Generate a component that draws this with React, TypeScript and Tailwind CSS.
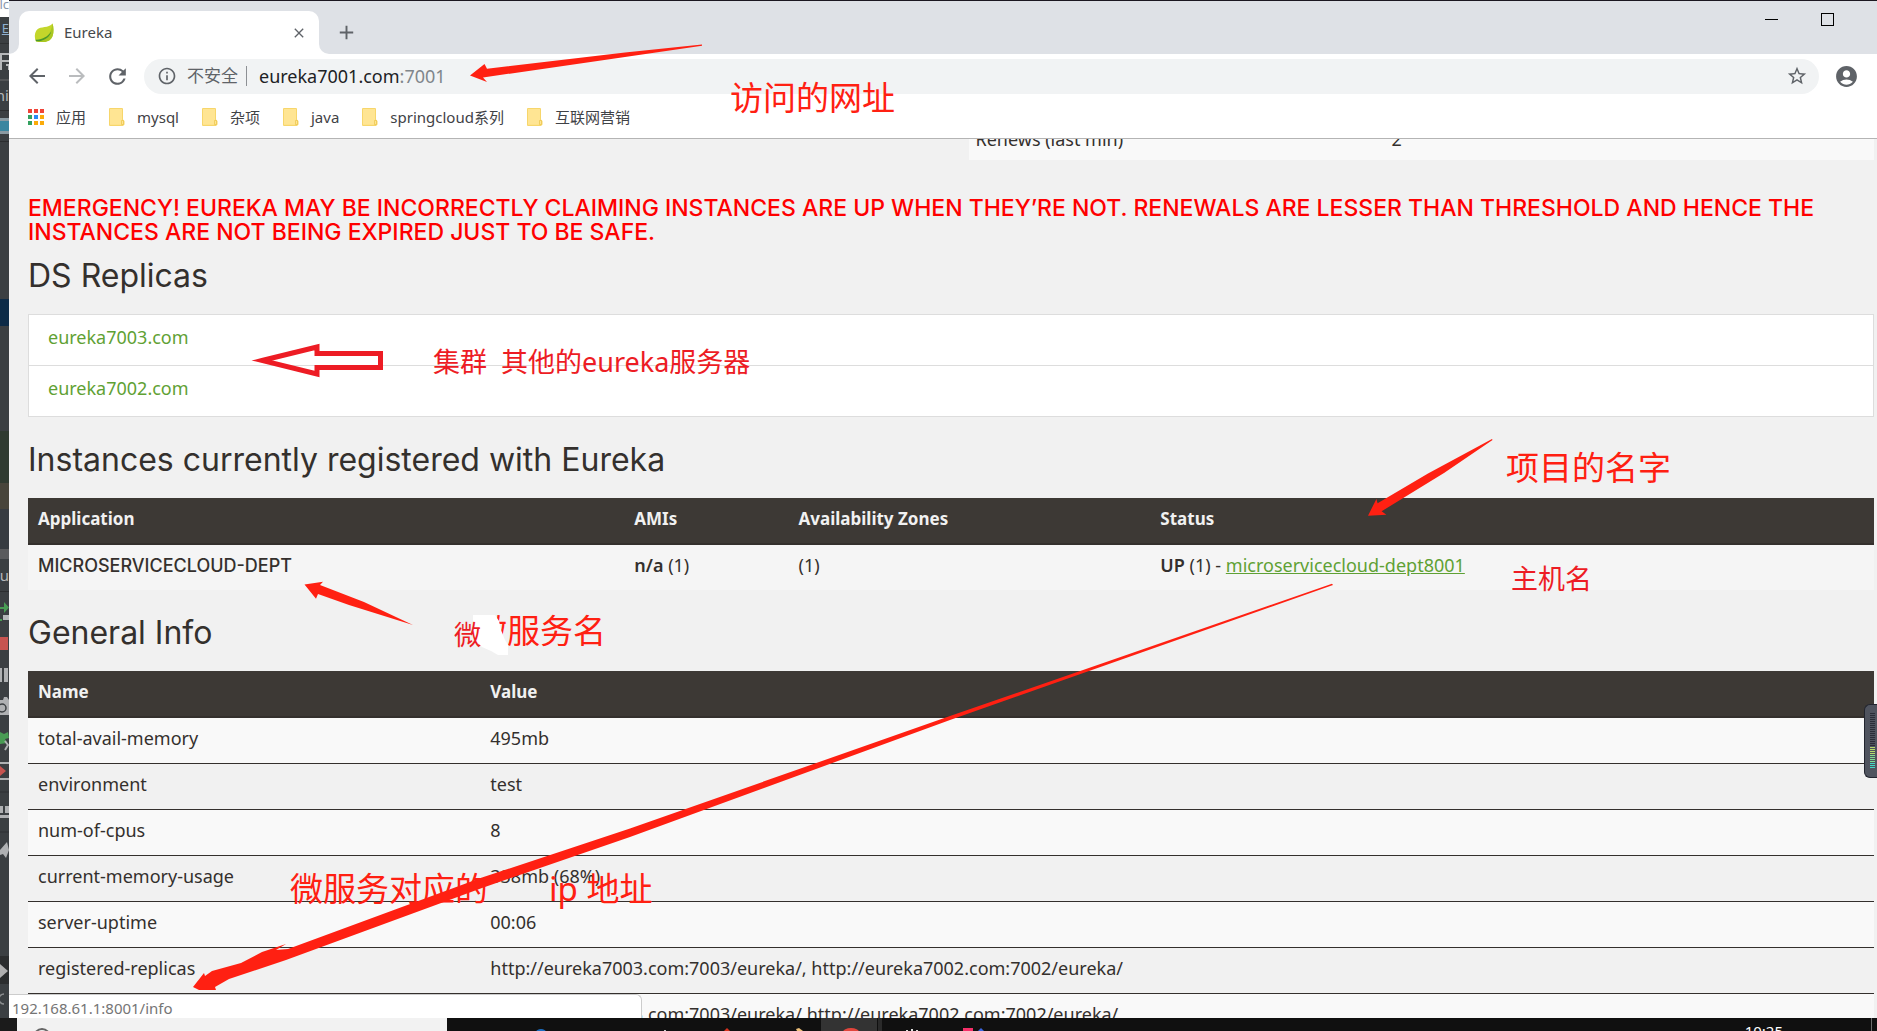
import React from "react";
import {
  MdArrowBack,
  MdArrowForward,
  MdRefresh,
  MdInfoOutline,
  MdStarBorder,
  MdAccountCircle,
  MdClose,
  MdAdd,
} from "react-icons/md";

const bookmarks = ["mysql", "杂项", "java", "springcloud系列", "互联网营销"];

const replicas = ["eureka7003.com", "eureka7002.com"];

const generalInfo = [
  ["total-avail-memory", "495mb"],
  ["environment", "test"],
  ["num-of-cpus", "8"],
  ["current-memory-usage", "338mb (68%)"],
  ["server-uptime", "00:06"],
  [
    "registered-replicas",
    "http://eureka7003.com:7003/eureka/, http://eureka7002.com:7002/eureka/",
  ],
  [
    "unavailable-replicas",
    "http://eureka7003.com:7003/eureka/,http://eureka7002.com:7002/eureka/,",
  ],
];

const appDots = [
  "bg-[#f04438]",
  "bg-[#f04438]",
  "bg-[#f04438]",
  "bg-[#34a160]",
  "bg-[#2a8cf5]",
  "bg-[#fbab09]",
  "bg-[#34a160]",
  "bg-[#fbab09]",
  "bg-[#fbab09]",
];

function LeafIcon() {
  return (
    <svg viewBox="0 0 20 20" className="size-5" aria-hidden="true">
      <path
        d="M18.6 0.4C19.6 4 20 9 18.6 13c-1.300 3.800-4.800 6-9 6-2.600 0-5.600.300-7.600-.600C.4 14.500.2 9.600 3.200 6.400 6.500 3 14.500 5.400 18.600.400z"
        fill="#c3d62b"
      />
      <path
        d="M18.600.4C19.600 4 20 9 18.600 13c-1.300 3.800-4.800 6-9 6-2 0-4.600.300-6.600-.2C10 19 16.500 13 18.600.400z"
        fill="#a9c722"
      />
      <path d="M1.600 16.600C8 17 14 13.500 17.200 8.500 16 14 9.500 19 2 18.300z" fill="#4c9a2a" />
    </svg>
  );
}

function FolderIcon() {
  return (
    <svg viewBox="0 0 16 18" className="h-[18px] w-4 shrink-0" aria-hidden="true">
      <path d="M1 0h12a1 1 0 0 1 1 1v10.500l1.500 1.500v3.500l-1.500 1.500H1a1 1 0 0 1-1-1V1a1 1 0 0 1 1-1z" fill="#f7d66b" />
      <path d="M1 1h12v15.800H1z" fill="#ffe593" />
      <path d="M12.500 12.500h2v4h-2z" fill="#ffe593" stroke="#eec852" strokeWidth="0.800" />
    </svg>
  );
}

function TabStrip() {
  return (
    <header className="flex h-[54px] shrink-0 items-end border-t border-[#1b1720] bg-[#dee1e6]">
      <div className="flex h-[43px] w-2.5 shrink-0 items-end bg-white">
        <span className="size-full rounded-br-[10px] bg-[#dee1e6]" />
      </div>
      <div className="flex h-[43px] w-[300px] items-center rounded-t-[10px] bg-white pr-3 pl-[15px]">
        <LeafIcon />
        <span className="ml-2.5 flex-1 text-[15px] text-[#45484c]">Eureka</span>
        <button aria-label="Close tab" className="text-[#5f6368]">
          <MdClose size={16} />
        </button>
      </div>
      <div className="flex h-[43px] w-2.5 shrink-0 items-end bg-white">
        <span className="size-full rounded-bl-[10px] bg-[#dee1e6]" />
      </div>
      <button aria-label="New tab" className="mb-[10px] ml-[6px] text-[#5f6368]">
        <MdAdd size={23} />
      </button>
      <div className="mr-[43px] ml-auto flex self-start pt-3">
        <button aria-label="Minimize" className="flex h-[13px] w-[13px] items-center">
          <span className="h-px w-full bg-black" />
        </button>
        <button aria-label="Maximize" className="ml-[43px] size-[13px] border border-black" />
      </div>
    </header>
  );
}

function Toolbar() {
  return (
    <div className="flex h-11 shrink-0 items-center bg-white pr-[18px] pl-4 text-[#5f6368]">
      <button aria-label="Back">
        <MdArrowBack size={24} />
      </button>
      <button aria-label="Forward" className="ml-4 text-[#babcbe]">
        <MdArrowForward size={24} />
      </button>
      <button aria-label="Reload" className="ml-4">
        <MdRefresh size={25} />
      </button>
      <div className="ml-[14px] flex h-[35px] flex-1 items-center rounded-full bg-[#f1f3f4] pr-[11px] pl-[13px]">
        <MdInfoOutline size={20} className="shrink-0" />
        <span className="ml-2.5 text-[17px] whitespace-nowrap">不安全</span>
        <span className="mx-2 h-5 w-px bg-[#8d9094]" />
        <div className="ml-1 flex-1 text-[18px] leading-6">
          <span className="text-[#202124]">eureka7001.com</span>
          <span className="text-[#80868b]">:7001</span>
        </div>
        <button aria-label="Bookmark this page">
          <MdStarBorder size={22} />
        </button>
      </div>
      <button aria-label="Profile" className="ml-[15px]">
        <MdAccountCircle size={25} />
      </button>
    </div>
  );
}

function BookmarksBar() {
  return (
    <nav className="flex h-[41px] shrink-0 items-center gap-[23px] border-b border-[#b4b4b4] bg-white pb-[2px] pl-[19px] text-[15px] text-[#3f4246]">
      <a href="#apps" className="flex items-center gap-3">
        <span className="grid grid-cols-3 gap-0.5">
          {appDots.map((c, i) => (
            <span key={i} className={`size-1 ${c}`} />
          ))}
        </span>
        应用
      </a>
      {bookmarks.map((b) => (
        <a key={b} href="#bookmark" className="flex items-center gap-3 whitespace-nowrap">
          <FolderIcon />
          {b}
        </a>
      ))}
    </nav>
  );
}

function SectionTitle({ children }: { children: React.ReactNode }) {
  return (
    <h1 className="mt-[23px] mb-[18px] font-['Inter','Noto_Sans',sans-serif] text-[32px] leading-10 text-[#34302d]">
      {children}
    </h1>
  );
}

const th =
  "border-b-2 border-[#34302d] px-2.5 pt-2.5 pb-[13px] text-left text-[17px] leading-[22px] font-bold text-[#f1f1f1]";
const td = "px-2.5 pt-2 pb-[13px] leading-6";

function EurekaPage() {
  return (
    <main className="min-h-0 flex-1 overflow-hidden bg-[#f1f1f1] pr-[3px] pl-[19px] text-[18px] text-[#34302d]">
      <div className="-mt-5 flex justify-end">
        <table className="w-[49%] table-fixed bg-[#f9f9f9]">
          <tbody>
            <tr>
              <td className="w-[46%] px-1.5 pt-2 pb-[9px] leading-6">Renews (last min)</td>
              <td className="px-1.5 pt-2 pb-[9px] leading-6">2</td>
            </tr>
          </tbody>
        </table>
      </div>

      <h4 className="mt-9 -mb-[11px] font-['Inter','Noto_Sans',sans-serif] text-[23px] leading-6 font-medium text-[#ff0000]">
        EMERGENCY! EUREKA MAY BE INCORRECTLY CLAIMING INSTANCES ARE UP WHEN THEY’RE NOT. RENEWALS ARE
        LESSER THAN THRESHOLD AND HENCE THE INSTANCES ARE NOT BEING EXPIRED JUST TO BE SAFE.
      </h4>

      <SectionTitle>DS Replicas</SectionTitle>
      <ul className="divide-y divide-[#dddddd] border border-[#dddddd] bg-white">
        {replicas.map((r) => (
          <li key={r} className="px-[19px] pt-2 pb-[14px] leading-7">
            <a href="#replica" className="text-[#5fa134]">
              {r}
            </a>
          </li>
        ))}
      </ul>

      <SectionTitle>Instances currently registered with Eureka</SectionTitle>
      <table className="w-full table-fixed">
        <thead className="bg-[#3d3935]">
          <tr>
            <th className={`w-[32.3%] ${th}`}>Application</th>
            <th className={`w-[8.9%] ${th}`}>AMIs</th>
            <th className={`w-[19.6%] ${th}`}>Availability Zones</th>
            <th className={th}>Status</th>
          </tr>
        </thead>
        <tbody className="bg-[#f5f5f5]">
          <tr>
            <td className="px-2.5 pt-[9px] pb-3 font-['Inter','Noto_Sans',sans-serif] leading-6 font-medium">
              MICROSERVICECLOUD-DEPT
            </td>
            <td className={td}>
              <b className="font-semibold">n/a</b> (1)
            </td>
            <td className={td}>(1)</td>
            <td className={td}>
              <b className="font-semibold">UP</b> (1) -{" "}
              <a href="#info" className="text-[#5fa134] underline">
                microservicecloud-dept8001
              </a>
            </td>
          </tr>
        </tbody>
      </table>

      <SectionTitle>General Info</SectionTitle>
      <table className="w-full table-fixed">
        <thead className="bg-[#3d3935]">
          <tr>
            <th className={`w-[24.5%] ${th}`}>Name</th>
            <th className={th}>Value</th>
          </tr>
        </thead>
        <tbody>
          {generalInfo.map(([name, value]) => (
            <tr key={name} className="border-b border-[#34302d] odd:bg-[#f9f9f9]">
              <td className={td}>{name}</td>
              <td className={td}>{value}</td>
            </tr>
          ))}
        </tbody>
      </table>
    </main>
  );
}

function IdeSliver() {
  return (
    <aside className="flex w-[9px] shrink-0 flex-col overflow-hidden bg-[#3b3f42] text-[13px] text-[#b5b7b9]">
      <div className="flex h-[17px] justify-end bg-white leading-[8px] text-[#8a97ad]">lc</div>
      <div className="flex h-[27px] justify-end border-b border-[#2e3133] leading-[22px] text-[#8fb0d0] underline">
        E
      </div>
      <div className="flex h-[37px] items-center justify-end border-b-2 border-[#535557]">
        <svg width="9" height="18" aria-hidden="true">
          <path d="M1 17V1h8M1 8h8M6 12h3v5" fill="none" stroke="#b5b7b9" strokeWidth="2" />
        </svg>
      </div>
      <div className="flex h-[30px] items-center justify-end border-b border-[#2b2d2f] text-[15px]">mi</div>
      <div className="flex h-[31px] items-center border-b border-[#2b2d2f]">
        <span className="h-4 w-full border-y-[3px] border-[#8a9aa2] bg-[#3a86a0]" />
      </div>
      <div className="h-[157px]" />
      <div className="h-[27px] bg-[#0d2b47]" />
      <div className="h-[105px]" />
      <div className="h-[52px] bg-[#303b31]" />
      <div className="h-[26px] bg-[#48453b]" />
      <div className="h-10 bg-[#373c41]" />
      <div className="h-2.5 bg-[#5a5b5d]" />
      <div className="flex h-[33px] items-center justify-end border-b border-[#2b2d2f] text-[15px]">Ru</div>
      <svg width="9" height="426" className="shrink-0" aria-hidden="true">
        <path d="M0 15h4v-5l5 5.500-5 5.500v-4H0z" fill="#499c54" />
        <path d="M3 23h6v5H3z" fill="#b5b7b9" />
        <path d="M0 27h2v2H0z" fill="#499c54" />
        <path d="M0 45h8v13H0z" fill="#c75450" />
        <path d="M0 76h2v14H0zM4 76h4v14H4z" fill="#afb1b3" />
        <path d="M0 108h3l1-3h3l2 3v15H0z" fill="#afb1b3" />
        <circle cx="2" cy="116" r="4" fill="#afb1b3" stroke="#3b3f42" strokeWidth="1.500" />
        <path d="M0 140l4 2 4-2 1 6-4 1 2 4-7 1z" fill="#499c54" />
        <path d="M5 149l3 4-3 5" fill="none" stroke="#afb1b3" strokeWidth="2" />
        <path d="M0 171h9M0 187h9" stroke="#afb1b3" strokeWidth="2" />
        <path d="M0 174l6 5-6 5z" fill="#c75450" />
        <path d="M0 200h9M0 240h9" stroke="#2e3133" />
        <path d="M0 214h3v7H0zM5 214h4v7H5zM0 223h9v3H0z" fill="#afb1b3" />
        <path d="M0 258l7-8 2 8-3 8-3-4-3 1z" fill="#afb1b3" />
        <path d="M0 364h9v28H0z" fill="#2b2d2e" />
        <path d="M0 372l8 7-8 7z" fill="#b0b0b0" />
        <path d="M4 402a5 5 0 1 0 0 10" fill="none" stroke="#8b8d8f" strokeWidth="1.500" />
      </svg>
    </aside>
  );
}

function Taskbar() {
  return (
    <footer className="flex h-[13px] shrink-0 overflow-hidden bg-[#101010]">
      <div className="w-[17px] bg-[#1b1b1b]" />
      <div className="h-full w-[430px] bg-[#f2f2f2] pt-2.5 pl-4">
        <span className="block size-[18px] rounded-full border-2 border-[#666]" />
      </div>
      <svg width="600" height="13" aria-hidden="true">
        <ellipse cx="94" cy="14" rx="5" ry="3" fill="#1c6dc0" />
        <path d="M217 12h2v1h-2z" fill="#ccc" />
        <path d="M277 13l3-3 3 3z" fill="#d8321f" />
        <path d="M349 11l3-1 4 3h-6z" fill="#eec07a" />
        <path d="M374 0h56v13h-56z" fill="#333" />
        <path d="M431 0h4v13h-4z" fill="#2a2a2a" />
        <ellipse cx="404" cy="14" rx="8" ry="4" fill="#e2453c" />
        <path d="M459 12h2v1h-2zM464 11h2v2h-2zM469 12h2v1h-2z" fill="#ddd" />
        <path d="M516 10h10v3h-10z" fill="#f52f68" />
        <path d="M531 13l3-3 3 3z" fill="#3b66e0" />
      </svg>
      <time className="mr-[88px] ml-auto h-4 pt-[5px] text-[15px] leading-4 text-white">10:25</time>
      <span className="mr-[5px] w-px bg-[#6d6d6d]" />
    </footer>
  );
}

function VolumeWidget() {
  return (
    <div className="absolute top-[704px] right-0 flex h-[74px] w-[13px] justify-end rounded-l-md border border-r-0 border-[#22252f] bg-[#50545f] py-2 pr-0.5">
      <div className="flex w-[5px] flex-col gap-px overflow-hidden">
        {Array.from({ length: 29 }, (_, i) => (
          <span
            key={i}
            className={`h-px shrink-0 ${i < 17 ? "bg-[#2b2e38]" : i < 21 ? "bg-[#b4dc6c]" : i < 25 ? "bg-[#7fdc92]" : "bg-[#45d8c4]"}`}
          />
        ))}
      </div>
    </div>
  );
}

function Annotations() {
  return (
    <div className="pointer-events-none absolute inset-0 overflow-hidden whitespace-pre text-[#ff2012]">
      <p className="absolute top-[81px] left-[730px] text-[33px] leading-[33px]">访问的网址</p>
      <p className="absolute top-[348px] left-[433px] text-[27px] leading-[27px] text-[#ed1c24]">
        {"集群  其他的eureka服务器"}
      </p>
      <p className="absolute top-[451px] left-[1506px] text-[33px] leading-[33px]">项目的名字</p>
      <p className="absolute top-[565px] left-[1511px] text-[27px] leading-[27px] text-[#ed1c24]">主机名</p>
      <p className="absolute top-[614px] left-[474px] text-[33px] leading-[33px]">微服务名</p>
      <svg className="absolute top-[615px] left-[473px] h-10 w-9" aria-hidden="true">
        <path d="M0 0h22l4 6 2 9 4 10 3 5v10h-10l-7-4-9-4-9-8z" fill="#fff" />
      </svg>
      <p className="absolute top-[621px] left-[454px] text-[27px] leading-[27px] text-[#ed1c24]">微</p>
      <p className="absolute top-[872px] left-[290px] text-[33px] leading-[33px]">微服务对应的</p>
      <p className="absolute top-[872px] left-[549px] text-[33px] leading-[33px]">ip 地址</p>
      <svg className="absolute inset-0 size-full" fill="#ff2012" aria-hidden="true">
        <path d="M470 75.500L484.500 64L487 68.700L625 52.500L702 44.500L702 45.700L625 57L483 77.500L487 82z" />
        <path d="M304.500 584.500L323 581.700L320 585L364 602L413 625L349 605L318 594L316 598.700z" />
        <path d="M1368 515.700L1376.400 499L1377.600 503.300L1428 473.500L1492 439L1492.500 440L1444 473L1381.600 511.300L1386.400 514.700z" />
        <path d="M193 987L204 973L205 976L212 971L241 963L262 952L286 944L276 950L288 949L482 877.500L630 828.500L950 716L1332 583.700L1333 585L950 720L630 837L482 888L286 960L229 979L215 987L216 990L199 990z" />
        <path
          d="M262 360.500L317 347V353.500H380.500V367.500H317V374z"
          fill="none"
          stroke="#ed1c24"
          strokeWidth="5"
          strokeMiterlimit="20"
        />
      </svg>
    </div>
  );
}

export default function App() {
  return (
    <div className="relative flex h-screen flex-col overflow-hidden font-['Noto_Sans','Noto_Sans_CJK_SC',sans-serif]">
      <div className="flex min-h-0 flex-1">
        <IdeSliver />
        <div className="relative flex min-w-0 flex-1 flex-col">
          <TabStrip />
          <Toolbar />
          <BookmarksBar />
          <EurekaPage />
          <div className="absolute bottom-0 left-0 h-6 w-[633px] rounded-tr-md border-t border-r border-[#cccccc] bg-white pl-[3px] text-[15px] leading-[26px] text-[#757575]">
            192.168.61.1:8001/info
          </div>
        </div>
      </div>
      <Taskbar />
      <VolumeWidget />
      <Annotations />
    </div>
  );
}
